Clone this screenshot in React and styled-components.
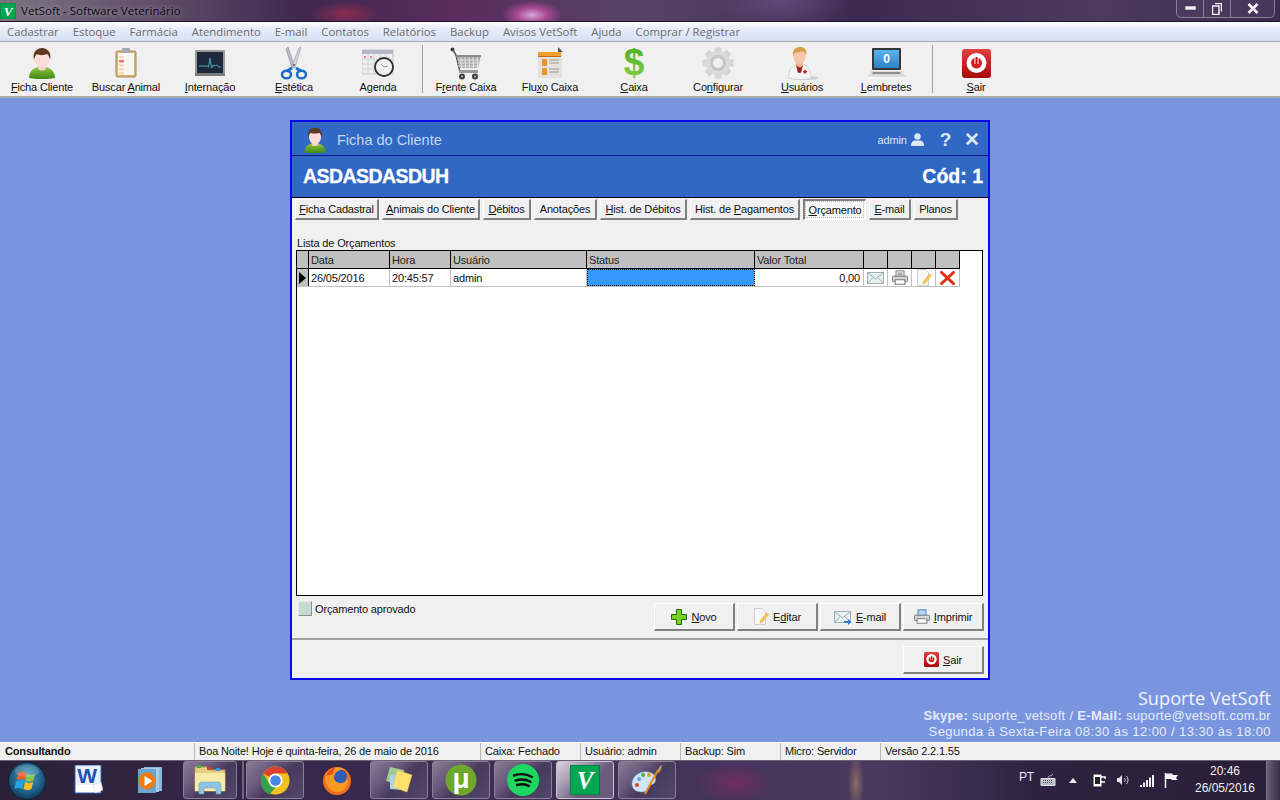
// App.jsx - VetSoft, Ficha do Cliente
import React from "react";
import styled, { createGlobalStyle } from "styled-components";

const GlobalStyle = createGlobalStyle`
  html, body {
    margin: 0;
    padding: 0;
    overflow: hidden;
  }
  body {
    font-family: "Liberation Sans", Arial, sans-serif;
    font-size: 11px;
    letter-spacing: -0.16px;
    color: #111;
  }
  * { box-sizing: border-box; }
  svg { display: block; }
`;

const Screen = styled.div`
  width: 1280px;
  height: 800px;
  display: flex;
  flex-direction: column;
  overflow: hidden;
  background: #7a95e0;
`;

/* title bar */
const TitleBar = styled.div`
  height: 22px;
  flex: none;
  display: flex;
  align-items: flex-start;
  justify-content: space-between;
  border-bottom: 1px solid #1c1424;
  background:
    radial-gradient(ellipse 36px 12px at 345px 14px, #8c2c50 0%, rgba(140, 44, 80, 0) 100%),
    radial-gradient(ellipse 30px 14px at 532px 15px, #d8a4d8 0%, #a84a92 50%, rgba(168, 74, 146, 0) 100%),
    radial-gradient(ellipse 70px 26px at 780px 2px, #5f4a78 0%, rgba(95, 74, 120, 0) 100%),
    linear-gradient(90deg, #7b7480 0px, #5d4a68 170px, #40284e 300px, #5a2c5e 460px, #574468 640px, #3c2a52 860px, #4c3a60 1100px, #3c2c50 1280px);
`;

const TitleLeft = styled.div`
  display: flex;
  align-items: center;
  height: 21px;
`;

const TitleText = styled.span`
  font-family: "Open Sans", sans-serif;
  font-size: 11.6px;
  letter-spacing: 0;
  color: #0a0610;
  margin-left: 5px;
  text-shadow: 0 0 5px rgba(255, 255, 255, 0.5);
`;

const WindowButtons = styled.div`
  display: flex;
  height: 18px;
  margin-right: 5px;
  border: 1px solid #8a8094;
  border-top: none;
  border-radius: 0 0 5px 5px;
  background: rgba(80, 66, 100, 0.55);
`;

const WindowButton = styled.div`
  width: ${(p) => p.$w}px;
  display: flex;
  align-items: center;
  justify-content: center;
  border-right: ${(p) => (p.$last ? "none" : "1px solid #8a8094")};
`;

/* menu */
const MenuBar = styled.div`
  height: 20px;
  flex: none;
  display: flex;
  align-items: center;
  padding-left: 7px;
  gap: 14px;
  border-bottom: 1px solid #a8a8a8;
  background: linear-gradient(180deg, #fdfdff 0%, #e6ecf8 35%, #d8e1f4 100%);
`;

const MenuItem = styled.span`
  font-family: "Open Sans", sans-serif;
  font-size: 11.35px;
  letter-spacing: 0;
  color: #6d6d6d;
  white-space: nowrap;
`;

/* toolbar */
const ToolBar = styled.div`
  height: 56px;
  flex: none;
  display: flex;
  background: #f0f0f0;
  border-bottom: 2px solid #a9a9a9;
`;

const ToolButton = styled.div`
  width: 84px;
  display: flex;
  flex-direction: column;
  align-items: center;
  padding-top: 4px;
`;

const ToolIcon = styled.div`
  width: 40px;
  height: 34px;
  display: flex;
  align-items: center;
  justify-content: center;
`;

const ToolLabel = styled.span`
  margin-top: 1px;
  font-size: 11px;
  line-height: 13px;
  white-space: nowrap;
`;

const ToolSep = styled.div`
  width: 1px;
  height: 48px;
  margin: 3px 1px 0 ${(p) => p.$before}px;
  background: #a0a0a0;
`;

/* desktop */
const Desktop = styled.div`
  flex: 1;
  display: flex;
  flex-direction: column;
  padding: 22px 9px 0 290px;
`;

const Dialog = styled.div`
  width: 700px;
  height: 560px;
  flex: none;
  display: flex;
  flex-direction: column;
  border: 2px solid #0a0ae8;
  background: #f0f0f0;
`;

const DialogHead = styled.div`
  height: 34px;
  flex: none;
  display: flex;
  align-items: center;
  justify-content: space-between;
  padding: 2px 8px 0 10px;
  background: #3068c4;
  border-bottom: 1px solid #05148c;
`;

const DialogTitle = styled.div`
  display: flex;
  align-items: center;
  gap: 9px;
  font-size: 14.5px;
  letter-spacing: 0;
  color: #c6d6f2;
`;

const HeadTools = styled.div`
  display: flex;
  align-items: center;
  gap: 4px;
  color: #dce6f8;
  font-size: 11px;
`;

const HeadGlyph = styled.span`
  font-size: 19px;
  font-weight: bold;
  color: #dce6f8;
  margin-left: ${(p) => p.$ml}px;
  line-height: 20px;
`;

const NameBar = styled.div`
  height: 42px;
  flex: none;
  display: flex;
  align-items: center;
  justify-content: space-between;
  padding: 0 5px 0 11px;
  background: #3068c4;
  border-bottom: 1px solid #000;
  color: #fff;
  font-size: 19.5px;
  font-weight: bold;
  letter-spacing: 0;
  -webkit-text-stroke: 0.3px #fff;
`;

const ClientName = styled.span`
  letter-spacing: -0.55px;
`;

const Tabs = styled.div`
  flex: none;
  display: flex;
  gap: 3px;
  padding: 1px 0 0 3px;
  height: 22px;
`;

const Tab = styled.div`
  width: ${(p) => p.$w}px;
  display: flex;
  align-items: center;
  justify-content: center;
  font-size: 11px;
  white-space: nowrap;
  background: #f0f0f0;
  border: 1px solid;
  border-color: #fff #808080 #808080 #fff;
  border-bottom-width: 2px;
  border-right-width: 2px;
  ${(p) =>
    p.$active &&
    `
    background: #f7f7f7;
    border-color: #808080 #fff #fff #808080;
    border-width: 2px 1px 1px 2px;
    outline: 1px dotted #bbb;
    outline-offset: -3px;
  `}
`;

const ListLabel = styled.div`
  flex: none;
  margin: 17px 0 0 5px;
  height: 13px;
  line-height: 13px;
  font-size: 11px;
`;

const Grid = styled.div`
  flex: none;
  width: 687px;
  height: 346px;
  margin: 0 0 0 4px;
  border: 1px solid #000;
  background: #fff;
`;

const GridRow = styled.div`
  display: grid;
  width: 663px;
  grid-template-columns: 12px 81px 61px 136px 168px 109px 24px 24px 24px 24px;
  height: ${(p) => p.$h}px;
  border-bottom: 1px solid ${(p) => (p.$head ? "#000" : "#c0c0c0")};
`;

const HeadCell = styled.div`
  display: flex;
  align-items: center;
  padding-left: 2px;
  background: #c0c0c0;
  border-right: 1px solid #000;
  font-size: 11px;
  color: #222;
`;

const Cell = styled.div`
  display: flex;
  align-items: center;
  justify-content: ${(p) => (p.$right ? "flex-end" : p.$center ? "center" : "flex-start")};
  padding: 0 ${(p) => (p.$right ? 3 : p.$center ? 0 : 2)}px;
  border-right: 1px solid #c0c0c0;
  font-size: 11px;
`;

const SelectedCell = styled.div`
  background: #3399ff;
  outline: 1px dotted #000;
  outline-offset: -1px;
  border-right: 1px solid #c0c0c0;
`;

const Indicator = styled.div`
  display: flex;
  align-items: center;
  justify-content: center;
  background: #c0c0c0;
  border-right: 1px solid #000;
`;

const FooterRow = styled.div`
  flex: none;
  height: 42px;
  display: flex;
  justify-content: space-between;
  padding: 5px 4px 0 6px;
`;

const Legend = styled.div`
  display: flex;
  align-items: flex-start;
  gap: 3px;
  font-size: 11px;
  line-height: 17px;
`;

const Swatch = styled.div`
  width: 14px;
  height: 15px;
  background: #c5dcd4;
  border: 1px solid;
  border-color: #e8e8e8 #909090 #909090 #e8e8e8;
`;

const ButtonRow = styled.div`
  display: flex;
  gap: 2px;
  padding-top: 2px;
`;

const Button = styled.div`
  width: 81px;
  height: 28px;
  display: flex;
  align-items: center;
  justify-content: center;
  gap: 4px;
  font-size: 11px;
  background: #f0f0f0;
  border: 1px solid;
  border-color: #fff #808080 #808080 #fff;
  border-bottom-width: 2px;
  border-right-width: 2px;
`;

const Divider = styled.div`
  flex: none;
  height: 2px;
  background: #a0a0a0;
`;

const BottomRow = styled.div`
  flex: 1;
  display: flex;
  justify-content: flex-end;
  padding: 6px 4px 0 0;
`;

const Support = styled.div`
  margin-top: 8px;
  text-align: right;
  color: #e6ecfa;
`;

const SupportTitle = styled.div`
  font-family: "Open Sans", sans-serif;
  font-size: 18.2px;
  line-height: 20px;
  letter-spacing: 0;
  color: #f0f4fe;
`;

const SupportLine = styled.div`
  font-size: 13px;
  line-height: 16px;
  letter-spacing: ${(p) => p.$spacing}px;
`;

/* status bar */
const StatusBar = styled.div`
  height: 18px;
  flex: none;
  display: flex;
  background: #f0f0f0;
  border-top: 1px solid #fff;
`;

const StatusCell = styled.div`
  width: ${(p) => p.$w}px;
  flex: ${(p) => (p.$w ? "none" : 1)};
  display: flex;
  align-items: center;
  padding: 0 0 1px ${(p) => (p.$bold ? 5 : 4)}px;
  font-size: 11px;
  font-weight: ${(p) => (p.$bold ? "bold" : "normal")};
  border-right: ${(p) => (p.$w ? "1px solid #b8b8b8" : "none")};
`;

/* taskbar */
const TaskBar = styled.div`
  height: 40px;
  flex: none;
  display: flex;
  border-top: 1px solid #6c6078;
  background:
    radial-gradient(ellipse 40px 20px at 735px 22px, #6e2c62 0%, rgba(110, 44, 98, 0) 100%),
    radial-gradient(ellipse 8px 30px at 856px 22px, #8a6a68 0%, rgba(138, 106, 104, 0) 100%),
    linear-gradient(90deg, #2c2038 0px, #3a2a50 400px, #44345c 700px, #4a3a5e 880px, #2e2240 1040px, #2a1e38 1280px);
`;

const StartSlot = styled.div`
  width: 59px;
  flex: none;
  padding-left: 8px;
  display: flex;
  align-items: center;
`;

const TaskSlot = styled.div`
  width: ${(p) => p.$w || 58}px;
  flex: none;
  height: 38px;
  margin: 0 ${(p) => (p.$mr === undefined ? 4 : p.$mr)}px 0 0;
  display: flex;
  align-items: center;
  justify-content: center;
  ${(p) =>
    p.$open &&
    `
    border: 1px solid ${p.$active ? "#c8c4d0" : "#8a8096"};
    border-radius: 3px;
    background: ${
      p.$active
        ? "linear-gradient(135deg, #d8d4dc 0%, #a89eb4 30%, #6c5c7c 60%, #6a5a7a 100%)"
        : "linear-gradient(135deg, #8a7c94 0%, #66567a 35%, #483a5c 55%, #54466a 100%)"
    };
  `}
`;

const TaskGrip = styled.div`
  width: 2px;
  height: 38px;
  margin-right: 2px;
  flex: none;
  background: #8a8096;
  opacity: 0.7;
`;

const Tray = styled.div`
  margin-left: auto;
  display: flex;
  align-items: center;
  height: 38px;
  color: #e8e8ee;
`;

const TrayText = styled.span`
  font-size: 12px;
  margin-right: 3px;
  margin-bottom: 6px;
`;

const TraySlot = styled.div`
  width: ${(p) => p.$w}px;
  display: flex;
  justify-content: center;
`;

const Clock = styled.div`
  width: 72px;
  margin-left: 6px;
  text-align: center;
  font-size: 12px;
  line-height: 17px;
  letter-spacing: 0;
  color: #f0f0f4;
`;

const ShowDesktop = styled.div`
  width: 14px;
  height: 39px;
  margin-left: 5px;
  border-left: 1px solid #807488;
  background: linear-gradient(90deg, #6a5e74 0%, #3a2e48 100%);
`;

/* icons */
const VLogo = ({ size = 18 }) => (
  <svg width={size} height={size} viewBox="0 0 18 18">
    <rect width="18" height="18" fill="#00a651" stroke="#0a7a40" />
    <text x="9" y="14.500" textAnchor="middle" fontFamily="Liberation Serif" fontStyle="italic" fontWeight="bold" fontSize="15" fill="#fff">V</text>
  </svg>
);

const PersonIcon = ({ size = 32 }) => (
  <svg width={size} height={size} viewBox="0 0 32 32">
    <defs>
      <linearGradient id="shirt" x1="0" y1="0" x2="0" y2="1">
        <stop offset="0" stopColor="#8cc63f" />
        <stop offset="1" stopColor="#3f8a14" />
      </linearGradient>
    </defs>
    <path d="M3 31c0-7 5-10 9-11h8c4 1 9 4 9 11-6 1.500-20 1.500-26 0z" fill="url(#shirt)" />
    <path d="M12 17h8v5c-2 2-6 2-8 0z" fill="#f6d0c8" />
    <ellipse cx="16" cy="12" rx="7.500" ry="9" fill="#fbdcd6" />
    <path d="M8 13C6 5 11 1 16 1s10 4 8 12c-.5-3-1.500-5-3-6-3 1.500-8 1.500-10 0-1.500 1-2.500 3-3 6z" fill="#5c3a22" />
  </svg>
);

const ClipboardIcon = () => (
  <svg width="22" height="30" viewBox="0 0 22 30">
    <rect x="1" y="3" width="20" height="26" rx="1.500" fill="#d8b47a" stroke="#a88a50" />
    <rect x="3" y="5" width="16" height="22" fill="#f7f5f0" />
    <rect x="7" y="0" width="8" height="5" rx="1" fill="#a8a8b0" />
    {[8, 12, 16, 20, 24].map((y, i) => (
      <rect key={y} x="4" y={y} width="5" height="2.500" rx="1" fill={i === 1 ? "#ef6a6a" : "#f0d8b4"} />
    ))}
  </svg>
);

const MonitorIcon = () => (
  <svg width="30" height="26" viewBox="0 0 30 26">
    <rect width="30" height="26" rx="1" fill="#9a9a9a" />
    <rect y="23" width="30" height="3" fill="#7c7c7c" />
    <rect x="2" y="2" width="26" height="21" fill="#1c2a3c" />
    <path d="M4 16h8l1.500 1 1.500-9 1.500 10 1.500-3 2 1 2-1 2 2h2" fill="none" stroke="#4fa3b8" strokeWidth="1" />
  </svg>
);

const ScissorsIcon = () => (
  <svg width="28" height="34" viewBox="0 0 28 34">
    <path d="M8 1l7 20-3 1L6 3z" fill="#b8bcc4" stroke="#80848c" strokeWidth=".5" />
    <path d="M21 1l-6 21-3-2 7-18z" fill="#d4d6dc" stroke="#80848c" strokeWidth=".5" />
    <circle cx="14" cy="19" r="1" fill="#555" />
    <path d="M12 22L7 25" stroke="#1c6cc8" strokeWidth="3" />
    <path d="M16 22l5 3" stroke="#1c6cc8" strokeWidth="3" />
    <ellipse cx="6.500" cy="28.500" rx="4.500" ry="3.800" fill="none" stroke="#1c6cc8" strokeWidth="2.500" />
    <ellipse cx="21.500" cy="28.500" rx="4.500" ry="3.800" fill="none" stroke="#1c6cc8" strokeWidth="2.500" />
  </svg>
);

const CalendarIcon = () => (
  <svg width="32" height="28" viewBox="0 0 32 28">
    <rect y="1" width="31" height="24" fill="#eceef2" stroke="#c4c8d0" />
    <rect y="1" width="31" height="4" fill="#b4b8c4" />
    {[6, 12, 18, 24].map((x) => (
      <path key={x} d={`M${x} 5v20`} stroke="#d0d4da" />
    ))}
    {[10, 15, 20].map((y) => (
      <path key={y} d={`M0 ${y}h31`} stroke="#d0d4da" />
    ))}
    <rect x="2" y="7" width="2" height="2" fill="#ee7a7a" />
    <rect x="8" y="7" width="2" height="2" fill="#ee7a7a" />
    <circle cx="22" cy="18" r="9" fill="#f4f4f4" stroke="#2c2c2c" strokeWidth="1.800" />
    <path d="M22 18l-3-3M22 18l4-1" stroke="#909090" strokeWidth="1" />
  </svg>
);

const CartIcon = () => (
  <svg width="32" height="33" viewBox="0 0 32 33">
    <circle cx="2.500" cy="2.500" r="2" fill="#3c3c3c" />
    <path d="M3 3l3 5 4 17h17" fill="none" stroke="#555" strokeWidth="1.500" />
    <path d="M6 8h25l-3 13H10z" fill="#a8a8a8" />
    <path d="M6 8h25v2H6z" fill="#8a8a8a" />
    {[11, 15, 19, 23, 27].map((x) => (
      <path key={x} d={`M${x} 10l.5 11`} stroke="#e4e4e4" />
    ))}
    {[13, 16, 19].map((y) => (
      <path key={y} d={`M8 ${y}h21`} stroke="#e4e4e4" />
    ))}
    <rect x="9" y="23" width="19" height="3" fill="#9a9a9a" />
    <circle cx="12" cy="29.500" r="3" fill="#3c3c3c" />
    <circle cx="25" cy="29.500" r="3" fill="#3c3c3c" />
    <circle cx="12" cy="29.500" r="1" fill="#ccc" />
    <circle cx="25" cy="29.500" r="1" fill="#ccc" />
  </svg>
);

const FlowIcon = () => (
  <svg width="28" height="32" viewBox="0 0 28 32">
    <rect x="2" y="5" width="24" height="26" fill="#e4e2dc" />
    <path d="M2 5h20l3-2v7H2z" fill="#f0a030" />
    <path d="M22 0l5 5h-5z" fill="#555" />
    <rect x="2" y="9" width="23" height="1" fill="#c06a10" />
    <rect x="6" y="12" width="5" height="7" rx="1" fill="#f09020" />
    <rect x="6" y="21" width="5" height="7" rx="1" fill="#f09020" />
    {[13, 16, 22, 25].map((y) => (
      <path key={y} d={`M13 ${y}h10`} stroke="#9a9a94" />
    ))}
  </svg>
);

const DollarText = styled.svg`
  overflow: visible;
`;

const DollarIcon = () => (
  <DollarText width="26" height="33" viewBox="0 0 26 33">
    <defs>
      <linearGradient id="dollar" x1="0" y1="0" x2="0" y2="1">
        <stop offset="0" stopColor="#3fae1e" />
        <stop offset="1" stopColor="#8ed04a" />
      </linearGradient>
    </defs>
    <text x="13" y="28" textAnchor="middle" fontFamily="Liberation Sans" fontWeight="bold" fontSize="37" fill="url(#dollar)">$</text>
  </DollarText>
);

const GearIcon = () => (
  <svg width="32" height="32" viewBox="0 0 32 32">
    {[0, 45, 90, 135, 180, 225, 270, 315].map((a) => (
      <rect key={a} x="12.500" y="0.500" width="7" height="8" rx="1" fill="#d4d4d4" transform={`rotate(${a} 16 16)`} />
    ))}
    <circle cx="16" cy="16" r="12" fill="#dadada" />
    <circle cx="16" cy="16" r="8" fill="#c6c6c6" />
    <circle cx="16" cy="16" r="5" fill="#f0f0f0" />
  </svg>
);

const DoctorIcon = () => (
  <svg width="36" height="33" viewBox="0 0 32 32">
    <ellipse cx="19" cy="30" rx="13" ry="2" fill="#d0d0d0" />
    <path d="M3 30c0-9 4-12 8-13h6c4 1 7 4 8 13-6 2-16 2-22 0z" fill="#f4f6f6" stroke="#b8bcbc" strokeWidth=".5" />
    <path d="M10 17h7l-2 8h-3z" fill="#9c1c1c" />
    <path d="M10 11h7v7l-3 2-4-2z" fill="#eeb090" />
    <ellipse cx="13.500" cy="9" rx="6" ry="7.500" fill="#f5c6a8" />
    <path d="M7.500 9C6 3 10 0 14 0s7 2 6 8c-1-2-2-4-4-4-2 1-6 1-7 2-1 1-1 2-1.500 3z" fill="#d8a040" />
    <path d="M17 24h4M19 22v4" stroke="#c81c1c" strokeWidth="1.500" />
  </svg>
);

const LaptopIcon = () => (
  <svg width="40" height="32" viewBox="0 0 40 32">
    <defs>
      <linearGradient id="lapScreen" x1="0" y1="0" x2="0" y2="1">
        <stop offset="0" stopColor="#5cb4ec" />
        <stop offset="1" stopColor="#2884c8" />
      </linearGradient>
    </defs>
    <rect x="6" y="1" width="29" height="22" rx="1" fill="#33363a" />
    <rect x="8" y="3" width="25" height="18" fill="url(#lapScreen)" />
    <text x="20.500" y="16" textAnchor="middle" fontFamily="Liberation Sans" fontWeight="bold" fontSize="12" fill="#fff">0</text>
    <path d="M5 24h31l4 6H1z" fill="#dcdcdc" />
    <path d="M7 25h27l1 2H6z" fill="#8c8c8c" />
    <rect x="1" y="30" width="39" height="1.500" fill="#f8f8f8" />
  </svg>
);

const PowerIcon = ({ size = 29 }) => (
  <svg width={size} height={size} viewBox="0 0 29 29">
    <defs>
      <linearGradient id="powerBg" x1="0" y1="0" x2="0" y2="1">
        <stop offset="0" stopColor="#e24040" />
        <stop offset="1" stopColor="#a80808" />
      </linearGradient>
    </defs>
    <rect width="29" height="29" rx="3" fill="url(#powerBg)" />
    <circle cx="14.500" cy="14" r="10" fill="#fff" />
    <circle cx="14.500" cy="14" r="5.500" fill="#d42020" />
    <rect x="12.500" y="7" width="4" height="8" fill="#fff" />
    <rect x="13.500" y="8" width="2" height="7" fill="#c01010" />
  </svg>
);

const MailIcon = ({ arrow }) => (
  <svg width="18" height="16" viewBox="0 0 18 16">
    <rect x=".5" y="2.500" width="16" height="11" fill="#e8f0f0" stroke="#9ab0b8" />
    <path d="M1 3l7.500 6L16 3M1 13l5-5.500M16 13l-5-5.500" fill="none" stroke="#9ab0b8" />
    {arrow && <path d="M10 12h4v-2l3.500 3-3.500 3v-2h-4z" fill="#2c7cd8" />}
  </svg>
);

const PrinterIcon = ({ blue }) => (
  <svg width="16" height="16" viewBox="0 0 18 17">
    <rect x="4.500" y=".5" width="9" height="7" fill={blue ? "#b8d4f4" : "#fff"} stroke={blue ? "#3c78c0" : "#666"} />
    {!blue && <path d="M6 3h6M6 5h6" stroke="#666" />}
    <rect x=".5" y="6.500" width="17" height="6" rx="1" fill="#d8d8d8" stroke={blue ? "#707070" : "#666"} />
    <rect x="3.500" y="10.500" width="11" height="5" fill="#fff" stroke={blue ? "#707070" : "#666"} />
  </svg>
);

const NoteIcon = () => (
  <svg width="16" height="17" viewBox="0 0 16 17">
    <path d="M1.500 .5h8l3 3v13h-11z" fill="#f8f8f8" stroke="#d0d0d0" />
    <path d="M13.500 5l2 1.500-6 7.500-2.500 1 .5-2.500z" fill="#f4c850" stroke="#d8a030" strokeWidth=".5" />
  </svg>
);

const XIcon = () => (
  <svg width="15" height="14" viewBox="0 0 16 15">
    <path d="M1.500 1.500l13 12M14.500 1.500l-13 12" stroke="#e03010" strokeWidth="3" strokeLinecap="round" />
  </svg>
);

const PlusIcon = () => (
  <svg width="16" height="16" viewBox="0 0 16 16">
    <path d="M5.500 .5h5v5h5v5h-5v5h-5v-5h-5v-5h5z" fill="#7cd020" stroke="#1c6c10" />
  </svg>
);

const UserGlyph = () => (
  <svg width="13" height="13" viewBox="0 0 13 13">
    <circle cx="6.500" cy="3.500" r="3.200" fill="#dce6f8" />
    <path d="M0 13c0-4 2-5.500 4-5.500h5c2 0 4 1.500 4 5.500z" fill="#dce6f8" />
  </svg>
);

const StartOrb = () => (
  <svg width="38" height="38" viewBox="0 0 38 38">
    <defs>
      <radialGradient id="orb" cx=".5" cy=".4" r=".6">
        <stop offset="0" stopColor="#4ea4cc" />
        <stop offset=".7" stopColor="#1c5c84" />
        <stop offset="1" stopColor="#123a58" />
      </radialGradient>
    </defs>
    <circle cx="19" cy="19" r="18.500" fill="url(#orb)" stroke="#0c2436" />
    <path d="M10 11c3-2 6-2 8 0l-1.500 7c-2-1.500-5-1.500-8 0z" fill="#f05a28" />
    <path d="M19 11.500c3 2 5 2 8 0l-1.500 7c-3 1.500-5 1.500-8 0z" fill="#8cc63f" />
    <path d="M8 19.500c3-1.500 5-1.500 8 0L14.500 27c-2-1.500-5-1.500-8 0z" fill="#2ca0e0" />
    <path d="M17 20c3 1.500 5 1.500 8 0L23.500 27c-3 1.500-5 1.500-8 0z" fill="#f8c020" />
    <ellipse cx="19" cy="9" rx="12" ry="6" fill="#fff" opacity=".18" />
  </svg>
);

const WordIcon = () => (
  <svg width="29" height="30" viewBox="0 0 29 30">
    <rect x="1" y="0" width="26" height="28" fill="#fff" stroke="#2a5cb8" />
    <rect x="2" y="1" width="24" height="19" fill="#e8f0fa" />
    <text x="13" y="18" textAnchor="middle" fontFamily="Liberation Sans" fontWeight="bold" fontSize="21" fill="#1c50b4">W</text>
    <path d="M19 20l8-3 2 8-8 3z" fill="#fff" stroke="#c0c8d4" strokeWidth=".5" />
  </svg>
);

const MediaIcon = () => (
  <svg width="26" height="26" viewBox="0 0 26 26">
    <rect x="7" y="0" width="18" height="24" fill="#8cb8d8" />
    <rect x="4" y="1" width="18" height="24" fill="#a8cce4" />
    <rect x="1" y="2" width="18" height="24" fill="#6ca4cc" />
    <circle cx="10" cy="14" r="8.500" fill="#f07c10" />
    <path d="M7.500 9l8 5-8 5z" fill="#fff" />
  </svg>
);

const FolderIcon = () => (
  <svg width="32" height="30" viewBox="0 0 32 30">
    <path d="M1 2h12l2 3h16v21H1z" fill="#e8d080" stroke="#b89c50" />
    <rect x="3" y="0" width="4" height="3" fill="#3cb03c" />
    <rect x="13" y="2" width="4" height="3" fill="#d03c30" />
    <rect x="22" y="3" width="4" height="3" fill="#3c90e0" />
    <path d="M1 8h30v18H1z" fill="#f8eaa8" />
    <path d="M5 29v-9c0-2 1-3 3-3h16c2 0 3 1 3 3v9h-5v-6H10v6z" fill="#8cc4e4" stroke="#5c98bc" strokeWidth=".5" />
  </svg>
);

const ChromeIcon = () => (
  <svg width="29" height="29" viewBox="0 0 29 29">
    <circle cx="14.500" cy="14.500" r="14" fill="#f4c020" />
    <path d="M14.500 .5A14 14 0 0 1 26.600 7.500H14.500a7 7 0 0 0-6 3.500L2.400 7.500A14 14 0 0 1 14.500 .5z" fill="#dc4030" />
    <path d="M2.400 7.500L8.500 18a7 7 0 0 0 6 3.500l-6 7A14 14 0 0 1 2.400 7.500z" fill="#30a04c" />
    <circle cx="14.500" cy="14.500" r="7" fill="#fff" />
    <circle cx="14.500" cy="14.500" r="5.300" fill="#4a86e8" />
  </svg>
);

const FirefoxIcon = () => (
  <svg width="30" height="32" viewBox="0 0 30 32">
    <circle cx="15" cy="17" r="14" fill="#f07020" />
    <circle cx="17" cy="13" r="8" fill="#2c5cb4" />
    <path d="M4 10C8 4 16 1 24 6c-6-1-9 1-11 4-2 3-1 8 4 9 4 1 8-2 8-6 3 8-3 16-11 15C7 27 1 18 4 10z" fill="#f89a20" />
    <path d="M4 12c2-5 6-8 10-9-2 2-3 4-3 7z" fill="#e84c1c" />
  </svg>
);

const StickiesIcon = () => (
  <svg width="32" height="28" viewBox="0 0 32 28">
    <path d="M7 1l14 3-3 15L3 15z" fill="#9ed49a" opacity=".95" />
    <path d="M7 9l14 1v14L7 23z" fill="#a8d4ec" />
    <path d="M14 4l15 5-5 17-14-5z" fill="#fbe070" stroke="#e8c850" strokeWidth=".5" />
  </svg>
);

const TorrentIcon = () => (
  <svg width="32" height="32" viewBox="0 0 32 32">
    <circle cx="16" cy="16" r="15.500" fill="#6ca82c" />
    <text x="16" y="24" textAnchor="middle" fontFamily="Liberation Sans" fontWeight="bold" fontSize="28" fill="#fff">μ</text>
  </svg>
);

const SpotifyIcon = () => (
  <svg width="32" height="32" viewBox="0 0 32 32">
    <circle cx="16" cy="16" r="16" fill="#1ed760" />
    <path d="M7 11.500c6-2 13-1.500 18 1.500M8.500 16.500c5-1.500 11-1 15 1.300M10 21c4-1 9-.8 12 1" fill="none" stroke="#111" strokeWidth="2.400" strokeLinecap="round" />
  </svg>
);

const PaintIcon = () => (
  <svg width="32" height="32" viewBox="0 0 32 32">
    <path d="M1 20C1 12 9 7 17 8c6 1 9 5 7 10-1 3-5 2-6 4-1 3-2 6-7 6C5 28 1 25 1 20z" fill="#cfe4f4" stroke="#8cb0cc" strokeWidth=".5" />
    <circle cx="8" cy="15" r="2" fill="#60a8e0" />
    <circle cx="12" cy="11" r="2" fill="#4cb050" />
    <circle cx="18" cy="11" r="2" fill="#e0a020" />
    <circle cx="6" cy="21" r="2" fill="#d84030" />
    <path d="M14 30L27 6" stroke="#e88a18" strokeWidth="2" />
    <path d="M26 7l3-5 2-1-1 5-2 3z" fill="#b89060" />
  </svg>
);

const TrayKeyboard = () => (
  <svg width="16" height="14" viewBox="0 0 16 14">
    <path d="M1 5.500h14v7H1z" fill="#bcbcc4" stroke="#e0e0e6" />
    <path d="M3 7.500h10M3 9.500h10" stroke="#5c5466" strokeDasharray="1 1" />
    <path d="M8 5c0-3 3-1 5-4" fill="none" stroke="#bcbcc4" />
  </svg>
);

const TrayPlug = () => (
  <svg width="14" height="16" viewBox="0 0 14 16">
    <rect x="1" y="2" width="9" height="13" fill="#fff" stroke="#222" />
    <path d="M9 5h4v1h1M9 10h4" stroke="#fff" strokeWidth="1.500" />
    <rect x="3" y="5" width="5" height="7" fill="#222" />
  </svg>
);

const TraySpeaker = () => (
  <svg width="14" height="14" viewBox="0 0 14 14">
    <path d="M1 5h2l3-3v10L3 9H1z" fill="#e4e4ec" />
    <path d="M8.500 5a3 3 0 0 1 0 4M10.500 3a6 6 0 0 1 0 8" fill="none" stroke="#c8c8d4" />
  </svg>
);

const TraySignal = () => (
  <svg width="15" height="13" viewBox="0 0 15 13">
    {[0, 3, 6, 9, 12].map((x, i) => (
      <rect key={x} x={x} y={11 - i * 2.500} width="2" height={2 + i * 2.500} fill="#f0f0f4" />
    ))}
  </svg>
);

const TrayFlag = () => (
  <svg width="14" height="16" viewBox="0 0 14 16">
    <path d="M1.500 1v15" stroke="#fff" strokeWidth="1.500" />
    <path d="M2 1.500h6l1 1.500h5l-2 3 2 2H8L7 7H2z" fill="#f4f4f8" />
  </svg>
);

const menuItems = ["Cadastrar", "Estoque", "Farmácia", "Atendimento", "E-mail", "Contatos", "Relatórios", "Backup", "Avisos VetSoft", "Ajuda", "Comprar / Registrar"];

const toolsA = [
  { before: "", key: "F", after: "icha Cliente", icon: <PersonIcon /> },
  { before: "Buscar ", key: "A", after: "nimal", icon: <ClipboardIcon /> },
  { before: "", key: "I", after: "nternação", icon: <MonitorIcon /> },
  { before: "", key: "E", after: "stética", icon: <ScissorsIcon /> },
  { before: "A", key: "g", after: "enda", icon: <CalendarIcon /> },
];

const toolsB = [
  { before: "F", key: "r", after: "ente Caixa", icon: <CartIcon /> },
  { before: "Flu", key: "x", after: "o Caixa", icon: <FlowIcon /> },
  { before: "", key: "C", after: "aixa", icon: <DollarIcon /> },
  { before: "Co", key: "n", after: "figurar", icon: <GearIcon /> },
  { before: "", key: "U", after: "suários", icon: <DoctorIcon /> },
  { before: "", key: "L", after: "embretes", icon: <LaptopIcon /> },
];

const tabs = [
  { w: 84, before: "", key: "F", after: "icha Cadastral" },
  { w: 98, before: "", key: "A", after: "nimais do Cliente" },
  { w: 48, before: "", key: "D", after: "ébitos" },
  { w: 63, before: "Anotações", key: "", after: "" },
  { w: 87, before: "", key: "H", after: "ist. de Débitos" },
  { w: 110, before: "Hist. de ", key: "P", after: "agamentos" },
  { w: 63, before: "", key: "O", after: "rçamento", active: true },
  { w: 42, before: "", key: "E", after: "-mail" },
  { w: 44, before: "Planos", key: "", after: "" },
];

const Mnemonic = ({ before, mark, after }) => (
  <span>
    {before}
    {mark && <u>{mark}</u>}
    {after}
  </span>
);

const renderTool = (t) => (
  <ToolButton key={t.before + t.key + t.after}>
    <ToolIcon>{t.icon}</ToolIcon>
    <ToolLabel>
      <Mnemonic before={t.before} mark={t.key} after={t.after} />
    </ToolLabel>
  </ToolButton>
);

const App = () => {
  return (
    <Screen>
      <GlobalStyle />
      <TitleBar>
        <TitleLeft>
          <VLogo size={16} />
          <TitleText>VetSoft - Software Veterinário</TitleText>
        </TitleLeft>
        <WindowButtons>
          <WindowButton $w={27}>
            <svg width="11" height="5" viewBox="0 0 11 5"><rect width="11" height="4" fill="#f0f0f4" stroke="#333" strokeWidth=".5" /></svg>
          </WindowButton>
          <WindowButton $w={27}>
            <svg width="10" height="12" viewBox="0 0 10 12"><path d="M3 .5h6.500v8M.5 3h6.500v8.500H.5z" fill="none" stroke="#f0f0f4" strokeWidth="1.500" /></svg>
          </WindowButton>
          <WindowButton $w={43} $last>
            <svg width="12" height="11" viewBox="0 0 12 11"><path d="M1.500 1l9 9M10.500 1l-9 9" stroke="#f4f4f8" strokeWidth="2.600" /></svg>
          </WindowButton>
        </WindowButtons>
      </TitleBar>

      <MenuBar>
        {menuItems.map((m) => (
          <MenuItem key={m}>{m}</MenuItem>
        ))}
      </MenuBar>

      <ToolBar>
        {toolsA.map(renderTool)}
        <ToolSep $before={2} />
        {toolsB.map(renderTool)}
        <ToolSep $before={4} />
        {renderTool({ before: "", key: "S", after: "air", icon: <PowerIcon /> })}
      </ToolBar>

      <Desktop>
        <Dialog>
          <DialogHead>
            <DialogTitle>
              <PersonIcon size={26} />
              Ficha do Cliente
            </DialogTitle>
            <HeadTools>
              <span>admin</span>
              <UserGlyph />
              <HeadGlyph $ml={12}>?</HeadGlyph>
              <HeadGlyph $ml={9}>✕</HeadGlyph>
            </HeadTools>
          </DialogHead>
          <NameBar>
            <ClientName>ASDASDASDUH</ClientName>
            <span>Cód: 1</span>
          </NameBar>
          <Tabs>
            {tabs.map((t) => (
              <Tab key={t.before + t.key + t.after} $w={t.w} $active={t.active}>
                <Mnemonic before={t.before} mark={t.key} after={t.after} />
              </Tab>
            ))}
          </Tabs>
          <ListLabel>Lista de Orçamentos</ListLabel>
          <Grid>
            <GridRow $head $h={18}>
              <HeadCell />
              <HeadCell>Data</HeadCell>
              <HeadCell>Hora</HeadCell>
              <HeadCell>Usuário</HeadCell>
              <HeadCell>Status</HeadCell>
              <HeadCell>Valor Total</HeadCell>
              <HeadCell />
              <HeadCell />
              <HeadCell />
              <HeadCell />
            </GridRow>
            <GridRow $h={18}>
              <Indicator>
                <svg width="7" height="12" viewBox="0 0 7 12"><path d="M0 0l7 6-7 6z" fill="#000" /></svg>
              </Indicator>
              <Cell>26/05/2016</Cell>
              <Cell>20:45:57</Cell>
              <Cell>admin</Cell>
              <SelectedCell />
              <Cell $right>0,00</Cell>
              <Cell $center><MailIcon /></Cell>
              <Cell $center><PrinterIcon /></Cell>
              <Cell $center><NoteIcon /></Cell>
              <Cell $center><XIcon /></Cell>
            </GridRow>
          </Grid>
          <FooterRow>
            <Legend>
              <Swatch />
              Orçamento aprovado
            </Legend>
            <ButtonRow>
              <Button><PlusIcon /><Mnemonic mark="N" after="ovo" /></Button>
              <Button><NoteIcon /><Mnemonic before="E" mark="d" after="itar" /></Button>
              <Button><MailIcon arrow /><Mnemonic mark="E" after="-mail" /></Button>
              <Button><PrinterIcon blue /><Mnemonic mark="I" after="mprimir" /></Button>
            </ButtonRow>
          </FooterRow>
          <Divider />
          <BottomRow>
            <Button><PowerIcon size={15} /><Mnemonic mark="S" after="air" /></Button>
          </BottomRow>
        </Dialog>
        <Support>
          <SupportTitle>Suporte VetSoft</SupportTitle>
          <SupportLine $spacing={0.31}>
            <b>Skype:</b> suporte_vetsoft / <b>E-Mail:</b> suporte@vetsoft.com.br
          </SupportLine>
          <SupportLine $spacing={0.42}>Segunda à Sexta-Feira 08:30 às 12:00 / 13:30 às 18:00</SupportLine>
        </Support>
      </Desktop>

      <StatusBar>
        <StatusCell $w={195} $bold>Consultando</StatusCell>
        <StatusCell $w={286}>Boa Noite! Hoje é quinta-feira, 26 de maio de 2016</StatusCell>
        <StatusCell $w={100}>Caixa: Fechado</StatusCell>
        <StatusCell $w={100}>Usuário: admin</StatusCell>
        <StatusCell $w={100}>Backup: Sim</StatusCell>
        <StatusCell $w={100}>Micro: Servidor</StatusCell>
        <StatusCell>Versão 2.2.1.55</StatusCell>
      </StatusBar>

      <TaskBar>
        <StartSlot><StartOrb /></StartSlot>
        <TaskSlot><WordIcon /></TaskSlot>
        <TaskSlot><MediaIcon /></TaskSlot>
        <TaskSlot $open $w={54} $mr={5}><FolderIcon /></TaskSlot>
        <TaskGrip />
        <TaskSlot $open><ChromeIcon /></TaskSlot>
        <TaskSlot><FirefoxIcon /></TaskSlot>
        <TaskSlot $open><StickiesIcon /></TaskSlot>
        <TaskSlot $open><TorrentIcon /></TaskSlot>
        <TaskSlot $open><SpotifyIcon /></TaskSlot>
        <TaskSlot $open $active><VLogo size={30} /></TaskSlot>
        <TaskSlot $open><PaintIcon /></TaskSlot>
        <Tray>
          <TrayText>PT</TrayText>
          <TraySlot $w={22}><TrayKeyboard /></TraySlot>
          <TraySlot $w={28}>
            <svg width="8" height="5" viewBox="0 0 8 5"><path d="M0 5l4-5 4 5z" fill="#f0f0f4" /></svg>
          </TraySlot>
          <TraySlot $w={24}><TrayPlug /></TraySlot>
          <TraySlot $w={24}><TraySpeaker /></TraySlot>
          <TraySlot $w={24}><TraySignal /></TraySlot>
          <TraySlot $w={24}><TrayFlag /></TraySlot>
          <Clock>
            20:46
            <br />
            26/05/2016
          </Clock>
          <ShowDesktop />
        </Tray>
      </TaskBar>
    </Screen>
  );
};

export default App;
